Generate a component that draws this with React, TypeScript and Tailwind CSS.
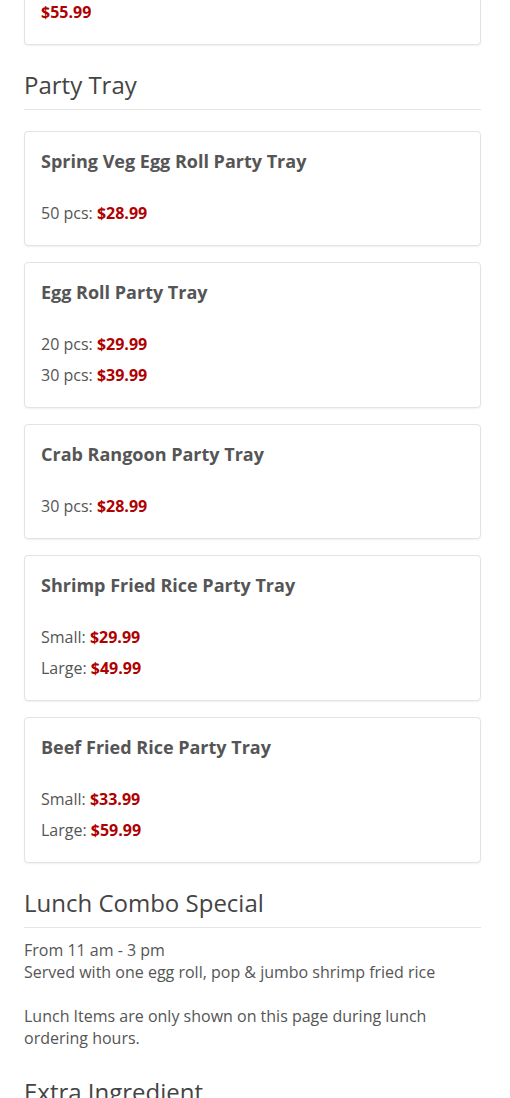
import React from 'react';

interface PriceLine {
  label?: string;
  price: string;
}

interface TrayItem {
  name: string;
  prices: PriceLine[];
}

const trays: TrayItem[] = [
  { name: 'Spring Veg Egg Roll Party Tray', prices: [{ label: '50 pcs:', price: '$28.99' }] },
  {
    name: 'Egg Roll Party Tray',
    prices: [
      { label: '20 pcs:', price: '$29.99' },
      { label: '30 pcs:', price: '$39.99' },
    ],
  },
  { name: 'Crab Rangoon Party Tray', prices: [{ label: '30 pcs:', price: '$28.99' }] },
  {
    name: 'Shrimp Fried Rice Party Tray',
    prices: [
      { label: 'Small:', price: '$29.99' },
      { label: 'Large:', price: '$49.99' },
    ],
  },
  {
    name: 'Beef Fried Rice Party Tray',
    prices: [
      { label: 'Small:', price: '$33.99' },
      { label: 'Large:', price: '$59.99' },
    ],
  },
];

function Price({ line }: { line: PriceLine }) {
  return (
    <p className="text-[16px] leading-[24px] mb-[7px] last:mb-0">
      {line.label && <span>{line.label} </span>}
      <span className="font-bold text-[#b00000]">{line.price}</span>
    </p>
  );
}

function SectionTitle({ children, className = '' }: { children: React.ReactNode; className?: string }) {
  return (
    <h2 className={`text-[24px] leading-[26px] text-[#444] font-normal pb-[11px] border-b border-[#e5e5e5] ${className}`}>
      {children}
    </h2>
  );
}

export default function App() {
  return (
    <div className="min-h-screen bg-white text-[#555]" style={{ fontFamily: '"Open Sans", "Liberation Sans", sans-serif' }}>
      <div className="px-6 w-[505px]">
        {/* tail of the previous card */}
        <div className="bg-white border-x border-b border-[#e3e3e3] rounded-b shadow-[0_1px_2px_rgba(0,0,0,0.06)] px-4 pb-5">
          <Price line={{ price: '$55.99' }} />
        </div>

        <SectionTitle className="mt-[27px]">Party Tray</SectionTitle>

        <div className="mt-[21px] flex flex-col gap-4">
          {trays.map((tray) => (
            <div
              key={tray.name}
              className="bg-white border border-[#e3e3e3] rounded shadow-[0_1px_2px_rgba(0,0,0,0.06)] px-4 pt-4 pb-5"
            >
              <h3 className="text-[18px] leading-[26px] font-bold text-[#555] mb-[27px]">{tray.name}</h3>
              {tray.prices.map((line, i) => (
                <Price key={i} line={line} />
              ))}
            </div>
          ))}
        </div>

        <SectionTitle className="mt-[27px]">Lunch Combo Special</SectionTitle>

        <div className="mt-[11px] text-[16px] leading-[22px]">
          <p>From 11 am - 3 pm</p>
          <p>Served with one egg roll, pop &amp; jumbo shrimp fried rice</p>
          <p className="mt-[22px]">Lunch Items are only shown on this page during lunch ordering hours.</p>
        </div>

        <SectionTitle className="mt-[30px]">Extra Ingredient</SectionTitle>
        <div className="h-24" />
      </div>
    </div>
  );
}
